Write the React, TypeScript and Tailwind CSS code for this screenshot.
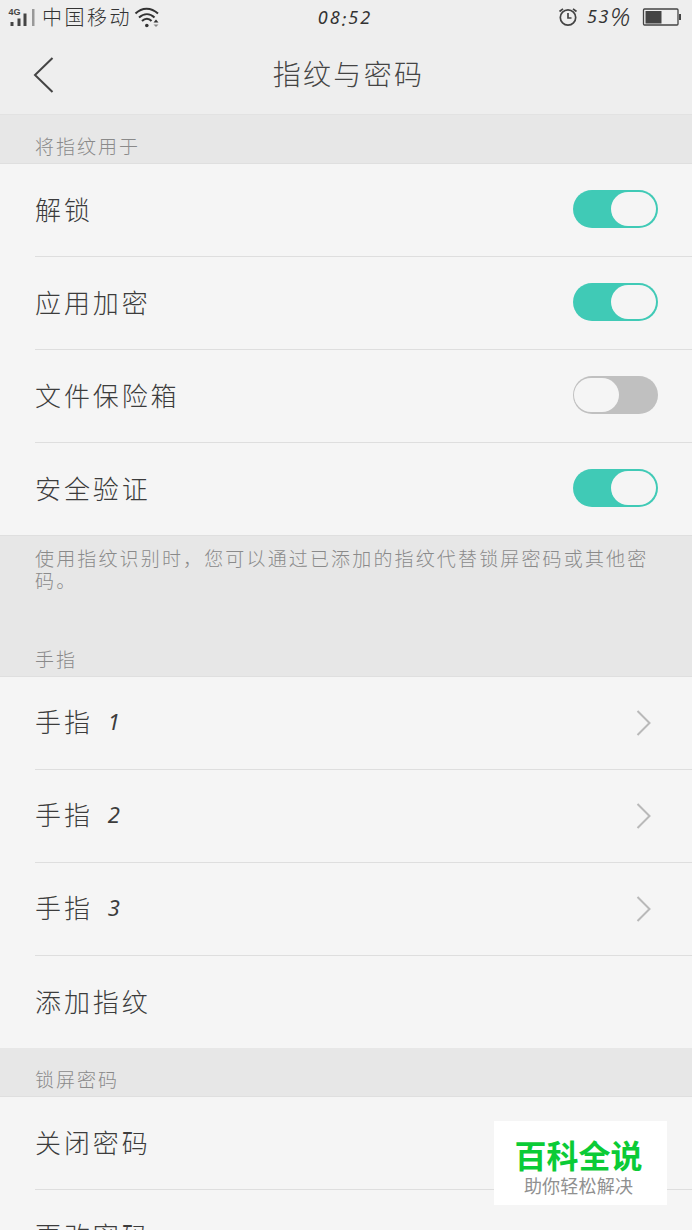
import React from 'react';

const StatusBar: React.FC = () => {
    return (
        <div className="h-[34px] pl-2 pr-[10px] grid grid-cols-3 items-center text-[#333]">
            <div className="flex flex-row items-center">
                <svg className="w-[28px] h-[20px] shrink-0" viewBox="0 0 28 20" fill="#444">
                    <text x="0.5" y="8" fontSize="9" fontWeight="700" fontFamily="Liberation Sans, sans-serif">4G</text>
                    <rect x="2.500" y="15" width="3" height="4" />
                    <rect x="9.500" y="11.500" width="3" height="7.500" />
                    <rect x="15.500" y="6.500" width="3" height="12.500" />
                    <rect x="24" y="2" width="2.500" height="17" fill="#999" />
                </svg>
                <span className="ml-[6px] text-[20px] leading-[24px] tracking-[2.500px] font-light whitespace-nowrap">中国移动</span>
                <svg className="ml-[2px] w-[26px] h-[22px] shrink-0" viewBox="0 0 26 22" fill="none" stroke="#333" strokeWidth="2">
                    <path d="M1.500 7.500C8 1 17 1 24 7.500" />
                    <path d="M5 11.500C10 7 16 7 20.500 11.500" />
                    <path d="M8 15C11 12 15 12 17.500 15" />
                    <circle cx="12.800" cy="19.500" r="1.800" fill="#333" stroke="none" />
                    <path d="M19.500 16.500l2.500-3 2.500 3z" fill="#333" stroke="none" />
                    <path d="M19.500 18.500h5l-2.500 2.500z" fill="#888" stroke="none" />
                </svg>
            </div>
            <div className="text-center text-[18px] leading-[20px] tracking-[2px] italic font-['Noto_Sans']">
                08<span className="inline-block translate-y-[2px]">:</span>52
            </div>
            <div className="flex flex-row items-center justify-end">
                <svg className="w-[20px] h-[20px]" viewBox="0 0 20 20" fill="none" stroke="#444" strokeWidth="1.700">
                    <circle cx="10" cy="10.500" r="7.700" />
                    <path d="M10 6v5h3.500M1.500 4.500L5 1.800M18.500 4.500L15 1.800" />
                </svg>
                <span className="ml-[9px] mr-[11px] pb-[2px] flex items-center text-[18px] leading-[20px] tracking-[1.600px] italic whitespace-nowrap font-['Noto_Sans']">
                    53<span className="w-[21px] text-[26px] tracking-normal font-light">%</span>
                </span>
                <svg className="w-[40px] h-[20px]" viewBox="0 0 40 20" fill="none">
                    <rect x="1.500" y="2" width="34.500" height="16" rx="1" stroke="#444" strokeWidth="1.300" />
                    <rect x="3.500" y="4" width="16" height="12.500" fill="#444" />
                    <rect x="37" y="7" width="2" height="6" fill="#444" />
                </svg>
            </div>
        </div>
    );
};

const Toggle: React.FC<{ on?: boolean }> = ({ on }) => {
    return (
        <button
            className={
                on
                    ? 'w-[85px] h-[38px] mb-[2px] p-[2px] rounded-full flex items-center justify-end bg-[#40cab6]'
                    : 'w-[85px] h-[38px] mb-[2px] p-[1px] rounded-full flex items-center justify-start bg-[#c0c0c0]'
            }
        >
            <span className="block w-[45px] h-[34px] rounded-full bg-[#f5f5f5]" />
        </button>
    );
};

const Chevron: React.FC = () => {
    return (
        <svg className="mr-[5px] w-[18px] h-[28px]" viewBox="0 0 18 28" fill="none" stroke="#b9b9b9" strokeWidth="2">
            <path d="M2.500 2L14.500 14L2.500 26" />
        </svg>
    );
};

const Row: React.FC<{
    label: React.ReactNode;
    last?: boolean;
    children?: React.ReactNode;
}> = ({ label, last, children }) => {
    return (
        <div className="pl-[35px] bg-[#f5f5f5]">
            <div className={`pr-[34px] flex flex-row items-center justify-between ${last ? 'h-[92px]' : 'h-[93px] border-b border-[#dedede]'}`}>
                <span className="pb-[3px] text-[26px] leading-[36px] tracking-[2.900px] font-light text-[#3c3c3c] whitespace-nowrap">{label}</span>
                {children}
            </div>
        </div>
    );
};

const SectionTitle: React.FC<{ children: React.ReactNode }> = ({ children }) => {
    return (
        <div className="h-[49px] pl-[35px] pt-[16px] border-b border-[#dfdfdf] text-[19px] leading-[30px] tracking-[2px] font-light text-[#8a8a8a]">
            {children}
        </div>
    );
};

const fingers = ['1', '2', '3'];

const App: React.FC = () => {
    return (
        <div className="relative w-[692px] h-[1230px] overflow-hidden bg-[#e7e7e7] font-['Noto_Sans_CJK_SC',sans-serif]">
            <div className="h-[115px] bg-[#eeeeee] border-b border-[#e2e2e2]">
                <StatusBar />
                <div className="h-[80px] px-[32px] grid grid-cols-[60px_1fr_60px] items-center">
                    <svg className="mt-[2px] w-[24px] h-[38px]" viewBox="0 0 24 38" fill="none" stroke="#444" strokeWidth="2">
                        <path d="M20.500 2L3 19L20.500 36" />
                    </svg>
                    <h1 className="pl-[5px] pb-[2px] text-center text-[28px] leading-[40px] tracking-[2.300px] font-light text-[#444]">指纹与密码</h1>
                </div>
            </div>

            <SectionTitle>将指纹用于</SectionTitle>
            <Row label="解锁"><Toggle on /></Row>
            <Row label="应用加密"><Toggle on /></Row>
            <Row label="文件保险箱"><Toggle /></Row>
            <Row label="安全验证" last><Toggle on /></Row>

            <div className="h-[93px] pl-[35px] pt-[11px] border-t border-[#dfdfdf] text-[19px] leading-[22px] tracking-[2.150px] font-light text-[#8a8a8a]">
                <p className="whitespace-nowrap">使用指纹识别时，您可以通过已添加的指纹代替锁屏密码或其他密<br />码。</p>
            </div>

            <SectionTitle>手指</SectionTitle>
            {fingers.map((finger) => (
                <Row key={finger} label={<>手指<span className="ml-[15px] inline-block -translate-y-[2px] text-[22px] italic font-normal font-['Noto_Sans']">{finger}</span></>}>
                    <Chevron />
                </Row>
            ))}
            <Row label="添加指纹" last />

            <SectionTitle>锁屏密码</SectionTitle>
            <Row label="关闭密码" />
            <Row label="更改密码" />

            <div className="absolute left-[494px] top-[1121px] w-[173px] h-[84px] pt-[14px] flex flex-col items-center bg-white whitespace-nowrap">
                <span className="-ml-[4px] text-[32px] leading-[38px] font-bold text-[#0bcb36]">百科全说</span>
                <span className="-ml-[4px] text-[18px] leading-[24px] tracking-[0.200px] text-[#909090]">助你轻松解决</span>
            </div>
        </div>
    );
};

export default App;
